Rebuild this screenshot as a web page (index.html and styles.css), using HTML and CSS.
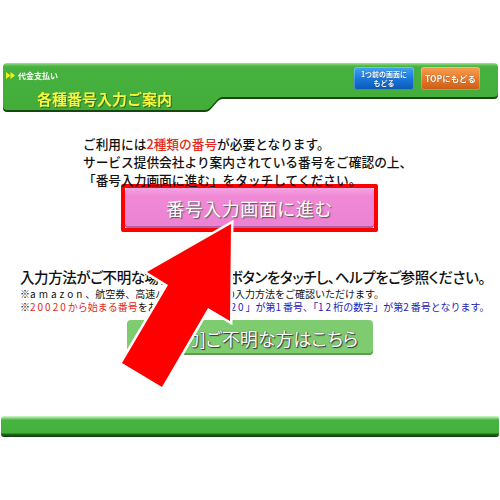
FILE: index.html
```html
<!DOCTYPE html>
<html lang="ja">
<head>
<meta charset="utf-8">
<title>各種番号入力ご案内</title>
<link rel="stylesheet" href="styles.css">
</head>
<body>
<div class="page">
  <div class="header-wrap">
    <header class="header">
      <div class="header-left">
        <div class="crumb">
          <svg class="crumb-icon" width="9" height="7" viewBox="0 0 9 7"><path d="M0 0 L4.5 3.5 L0 7Z M4.5 0 L9 3.5 L4.5 7Z" fill="#f2ee1a"/></svg>
          <span>代金支払い</span>
        </div>
        <h1 class="title">各種番号入力ご案内</h1>
      </div>
      <div class="header-right">
        <a class="hbtn hbtn-blue">1つ前の画面に<br>もどる</a>
        <a class="hbtn hbtn-orange">TOPにもどる</a>
      </div>
    </header>
  </div>

  <section class="intro">
    <p>ご利用には<span class="red">2種類の番号</span>が必要となります。</p>
    <p>サービス提供会社より案内されている番号をご確認の上、</p>
    <p>「番号入力画面に進む」をタッチしてください。</p>
  </section>

  <div class="cta-frame"><a class="cta">番号入力画面に進む</a></div>

  <section class="help">
    <p class="help-title">入力方法がご不明な場合は下記のボタンをタッチし、ヘルプをご参照ください。</p>
    <p class="note">※<span class="wide">amazon</span>、航空券、高速バス、ゲーム等の入力方法をご確認いただけます。</p>
    <p class="note">※<span class="red"><span class="d">20020</span>から始まる番号</span>をお持ちの方<span class="blue">「<span class="d">20020</span>」が第<span class="d">1</span>番号、「<span class="d">12</span>桁の数字」が第<span class="d">2</span>番号となります。</span></p>
  </section>

  <a class="help-btn">[入力]ご不明な方はこちら</a>

  <div class="footer-bar"></div>

  <svg class="arrow" width="500" height="500" viewBox="0 0 500 500">
    <polygon points="231,224 230,321 208,308 162,387 122,363 168,285 147,272" fill="#ff0000" stroke="#ffffff" stroke-width="5" stroke-linejoin="miter" paint-order="stroke"/>
  </svg>
</div>
</body>
</html>
```

FILE: styles.css
```css
* { box-sizing: border-box; margin: 0; padding: 0; }
html, body { background: #ffffff; }
body {
  font-family: "Noto Sans CJK JP", "Noto Sans", sans-serif;
  color: #111111;
  width: 500px;
  height: 500px;
  overflow: hidden;
}
a { text-decoration: none; }

.page {
  position: relative;
  width: 500px;
  height: 500px;
  padding-top: 63px;
}

/* ---------- header ---------- */
.header-wrap {
  margin-left: 3px;
  width: 495px;
  filter: drop-shadow(0 2px 0 #17460f);
}
.header {
  height: 47px;
  display: flex;
  justify-content: space-between;
  clip-path: path("M4 0 H491 Q495 0 495 4 V30 Q495 34 491 34 H220 Q217 34 215 36 L207 45 Q205 47 202 47 H4 Q0 47 0 43 V4 Q0 0 4 0 Z");
  background: linear-gradient(#a8e49c 0, #62c456 2px, #46b13e 4px, #43ad3a 100%);
}
.header-left { padding: 6px 0 0 3px; }
.crumb {
  display: flex;
  align-items: center;
  gap: 3px;
  height: 12px;
  color: #ffffff;
  font-size: 8px;
  font-weight: 700;
}
.title {
  margin: 9px 0 0 31px;
  font-size: 15px;
  line-height: 18px;
  font-weight: 700;
  color: #f6f53e;
  text-shadow: 1px 1px 0 #2d6a25;
}
.header-right {
  display: flex;
  gap: 7px;
  padding: 4px 18px 0 0;
}
.hbtn {
  display: flex;
  align-items: center;
  justify-content: center;
  text-align: center;
  height: 23px;
  border-radius: 3px;
  color: #ffffff;
  font-size: 7px;
  font-weight: 700;
  line-height: 8.5px;
  white-space: nowrap;
  text-shadow: 0 0 1px rgba(0,0,0,.5);
}
.hbtn-blue {
  width: 60px;
  background: linear-gradient(#45a6f4, #1a78dc 50%, #0a57b6);
  box-shadow: inset 0 0 0 1px rgba(255,255,255,.25);
}
.hbtn-orange {
  width: 59px;
  font-size: 8.5px;
  background: linear-gradient(#f7a052, #ea7a2a 50%, #c95c18);
  box-shadow: inset 0 0 0 1px rgba(255,255,255,.25);
}

/* ---------- intro ---------- */
.intro {
  margin-top: 25px;
  padding-left: 83px;
  font-size: 12.7px;
  line-height: 18px;
  font-weight: 500;
}
.red { color: #e42a22; }
.blue { color: #1e22b4; }

.cta-frame {
  margin: -5px 0 0 121px;
  width: 257px;
  height: 48px;
  border: 4px solid #ff0000;
  border-radius: 2px;
}
.cta {
  display: flex;
  align-items: center;
  justify-content: center;
  height: 100%;
  border-radius: 3px;
  background: linear-gradient(#f7a4e2, #ef89d6 20%, #ec82d2 100%);
  box-shadow: inset 0 -2px 0 #b460a6;
  color: #ffffff;
  font-size: 18px;
  letter-spacing: 0.5px;
  text-shadow: 1px 1px 1px #555555;
}

/* ---------- help ---------- */
.help {
  margin-top: 35px;
  padding-left: 20px;
}
.help-title {
  font-size: 14.5px;
  line-height: 20px;
  font-weight: 500;
  letter-spacing: -0.4px;
  white-space: nowrap;
  font-feature-settings: "palt";
}
.note {
  font-size: 10px;
  line-height: 13px;
  white-space: nowrap;
}
.wide { letter-spacing: 3px; }
.d { letter-spacing: 2px; }

.help-btn {
  display: flex;
  align-items: center;
  justify-content: center;
  margin: 7px 0 0 127px;
  padding-left: 16px;
  width: 246px;
  height: 35px;
  border-radius: 4px;
  background: #7fcb70;
  box-shadow: inset 0 -2px 0 #5a9d4e;
  color: #ffffff;
  font-size: 18px;
  font-feature-settings: "palt";
  text-shadow: 1px 1px 1px #333333, 0 0 1px #333333;
}

.footer-bar {
  margin: 61px 0 0 1px;
  width: 498px;
  height: 21px;
  border-radius: 3px;
  background: linear-gradient(#d5f5cd 0, #8fd985 2px, #47b43f 4px, #43b13b 17px, #1f6a1a 18px, #0f3c0c 21px);
}

.arrow {
  position: absolute;
  left: 0;
  top: 0;
  pointer-events: none;
}
```
